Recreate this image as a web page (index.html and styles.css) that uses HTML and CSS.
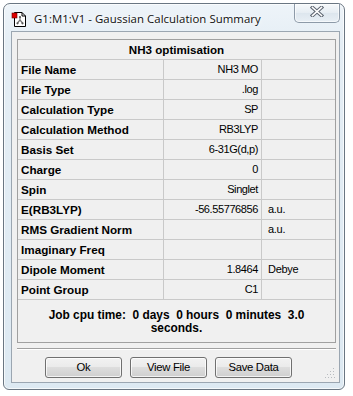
FILE: index.html
```html
<!DOCTYPE html>
<html>
<head>
<meta charset="utf-8">
<link rel="stylesheet" href="styles.css">
</head>
<body>
<div class="win">
  <div class="titlebar">
    <svg class="appicon" width="16" height="16" viewBox="0 0 16 16">
      <path d="M3.5 1.5 H11 L14.5 5 V15.5 H3.5 Z" fill="#fff" stroke="#000"/>
      <path d="M11 1.5 V5 H14.5" fill="none" stroke="#000"/>
      <rect x="1" y="2" width="5" height="5" fill="#e00000" stroke="#600" stroke-width="0.6"/>
      <path d="M9 6 V9 L6.5 12 M9 9 L11.5 12" fill="none" stroke="#777" stroke-width="1.2"/>
      <circle cx="9" cy="6" r="1.1" fill="#555"/>
      <circle cx="6.5" cy="12.3" r="1.1" fill="#555"/>
      <circle cx="11.5" cy="12.3" r="1.1" fill="#555"/>
    </svg>
    <span class="title">G1:M1:V1 - Gaussian Calculation Summary</span>
    <div class="close">
      <svg width="14" height="11" viewBox="0 0 14 11">
        <path d="M2.5 1.5 L11.5 9.5 M11.5 1.5 L2.5 9.5" stroke="#5c6470" stroke-width="3.6" stroke-linecap="square"/>
        <path d="M2.5 1.5 L11.5 9.5 M11.5 1.5 L2.5 9.5" stroke="#fff" stroke-width="1.6" stroke-linecap="square"/>
      </svg>
    </div>
  </div>
  <div class="client">
    <div class="summary">
      <div class="cell head">NH3 optimisation</div>

      <div class="cell label">File Name</div><div class="cell val">NH3 MO</div><div class="cell unit"></div>
      <div class="cell label">File Type</div><div class="cell val">.log</div><div class="cell unit"></div>
      <div class="cell label">Calculation Type</div><div class="cell val">SP</div><div class="cell unit"></div>
      <div class="cell label">Calculation Method</div><div class="cell val">RB3LYP</div><div class="cell unit"></div>
      <div class="cell label">Basis Set</div><div class="cell val">6-31G(d,p)</div><div class="cell unit"></div>
      <div class="cell label">Charge</div><div class="cell val">0</div><div class="cell unit"></div>
      <div class="cell label">Spin</div><div class="cell val">Singlet</div><div class="cell unit"></div>
      <div class="cell label">E(RB3LYP)</div><div class="cell val">-56.55776856</div><div class="cell unit">a.u.</div>
      <div class="cell label">RMS Gradient Norm</div><div class="cell val"></div><div class="cell unit">a.u.</div>
      <div class="cell label">Imaginary Freq</div><div class="cell val"></div><div class="cell unit"></div>
      <div class="cell label">Dipole Moment</div><div class="cell val">1.8464</div><div class="cell unit">Debye</div>
      <div class="cell label">Point Group</div><div class="cell val">C1</div><div class="cell unit"></div>

      <div class="cpu">Job cpu time:  0 days  0 hours  0 minutes  3.0<br>seconds.</div>
    </div>
    <div class="sep"></div>
    <div class="buttons">
      <div class="btn">Ok</div>
      <div class="btn">View File</div>
      <div class="btn">Save Data</div>
    </div>
    <svg class="grip" width="10" height="10" viewBox="0 0 10 10">
      <g fill="#b8bcc0">
        <rect x="8" y="0" width="1" height="1"/>
        <rect x="5" y="3" width="1" height="1"/><rect x="8" y="3" width="1" height="1"/>
        <rect x="2" y="6" width="1" height="1"/><rect x="5" y="6" width="1" height="1"/><rect x="8" y="6" width="1" height="1"/>
        <rect x="0" y="9" width="1" height="1"/><rect x="3" y="9" width="1" height="1"/><rect x="6" y="9" width="1" height="1"/><rect x="9" y="9" width="1" height="1"/>
      </g>
    </svg>
  </div>
</div>
</body>
</html>
```

FILE: styles.css
```css
html, body {
  margin: 0;
  padding: 0;
  background: #ffffff;
}

.win {
  box-sizing: border-box;
  width: 342px;
  height: 387px;
  margin: 3px 0 0 3px;
  border: 1px solid #6a7682;
  border-radius: 7px 7px 6px 6px;
  background: linear-gradient(#eef4f9 0%, #e5eef5 10%, #dde9f2 100%);
  display: flex;
  flex-direction: column;
  padding: 0 4px 6px 7px;
  box-shadow: inset 0 0 0 1px rgba(255,255,255,0.7);
}

.titlebar {
  height: 27px;
  display: flex;
  align-items: flex-start;
}

.appicon {
  margin-top: 7px;
  flex: none;
}

.title {
  margin-left: 7px;
  margin-top: 7px;
  font-family: "Open Sans", "Noto Sans", sans-serif;
  font-size: 11.4px;
  line-height: 15px;
  color: #101010;
  letter-spacing: 0.05px;
  text-shadow: 0 0 6px #ffffff, 0 0 3px #ffffff;
}

.close {
  margin-left: auto;
  width: 46px;
  height: 19px;
  box-sizing: border-box;
  border: 1px solid #8d9aa8;
  border-top: none;
  border-radius: 0 0 5px 5px;
  background: linear-gradient(#f6f9fb, #e6edf3 50%, #dde6ee 51%, #e8eff5);
  display: flex;
  align-items: center;
  justify-content: center;
  padding-bottom: 3px;
  box-shadow: inset 0 0 0 1px rgba(255,255,255,0.6);
}

.client {
  position: relative;
  flex: 1;
  box-sizing: border-box;
  background: #f0f0f0;
  border: 1px solid #9ba6b1;
  padding: 7px 3px 0 5px;
}

.summary {
  display: grid;
  grid-template-columns: 146px 98px 1fr;
  width: 319px;
  box-sizing: border-box;
  border: 1px solid #a0a0a0;
  font-family: "Liberation Sans", Arial, sans-serif;
  color: #000;
}

.cell {
  box-sizing: border-box;
  height: 20px;
  border-bottom: 1px solid #c9c9c9;
  line-height: 19px;
  white-space: nowrap;
  overflow: hidden;
}

.head {
  grid-column: 1 / 4;
  text-align: center;
  font-weight: bold;
  font-size: 11.6px;
}

.label {
  border-right: 1px solid #c9c9c9;
  padding-left: 3px;
  font-weight: bold;
  font-size: 11.7px;
}

.val {
  border-right: 1px solid #c9c9c9;
  text-align: right;
  padding-right: 3px;
  font-size: 11px;
  letter-spacing: -0.4px;
}

.unit {
  padding-left: 6px;
  font-size: 11px;
  letter-spacing: -0.3px;
}

.cpu {
  grid-column: 1 / 4;
  height: 42px;
  box-sizing: border-box;
  padding-top: 9px;
  text-align: center;
  font-weight: bold;
  font-size: 11.9px;
  line-height: 13px;
  white-space: pre;
}

.sep {
  width: 319px;
  height: 1px;
  margin-top: 5px;
  background: #a0a0a0;
  border-bottom: 1px solid #ffffff;
}

.buttons {
  display: flex;
  gap: 8px;
  margin-top: 7px;
  padding-left: 28px;
}

.btn {
  box-sizing: border-box;
  width: 77px;
  height: 21px;
  border: 1px solid #707070;
  border-radius: 3px;
  background: linear-gradient(#f2f2f2 0%, #ebebeb 45%, #dddddd 50%, #cfcfcf 100%);
  box-shadow: inset 0 0 0 1px rgba(255,255,255,0.75);
  text-align: center;
  font-family: "Liberation Sans", Arial, sans-serif;
  font-size: 11.3px;
  letter-spacing: -0.3px;
  line-height: 19px;
  color: #000;
}

.grip {
  position: absolute;
  right: 4px;
  bottom: 4px;
}
```
